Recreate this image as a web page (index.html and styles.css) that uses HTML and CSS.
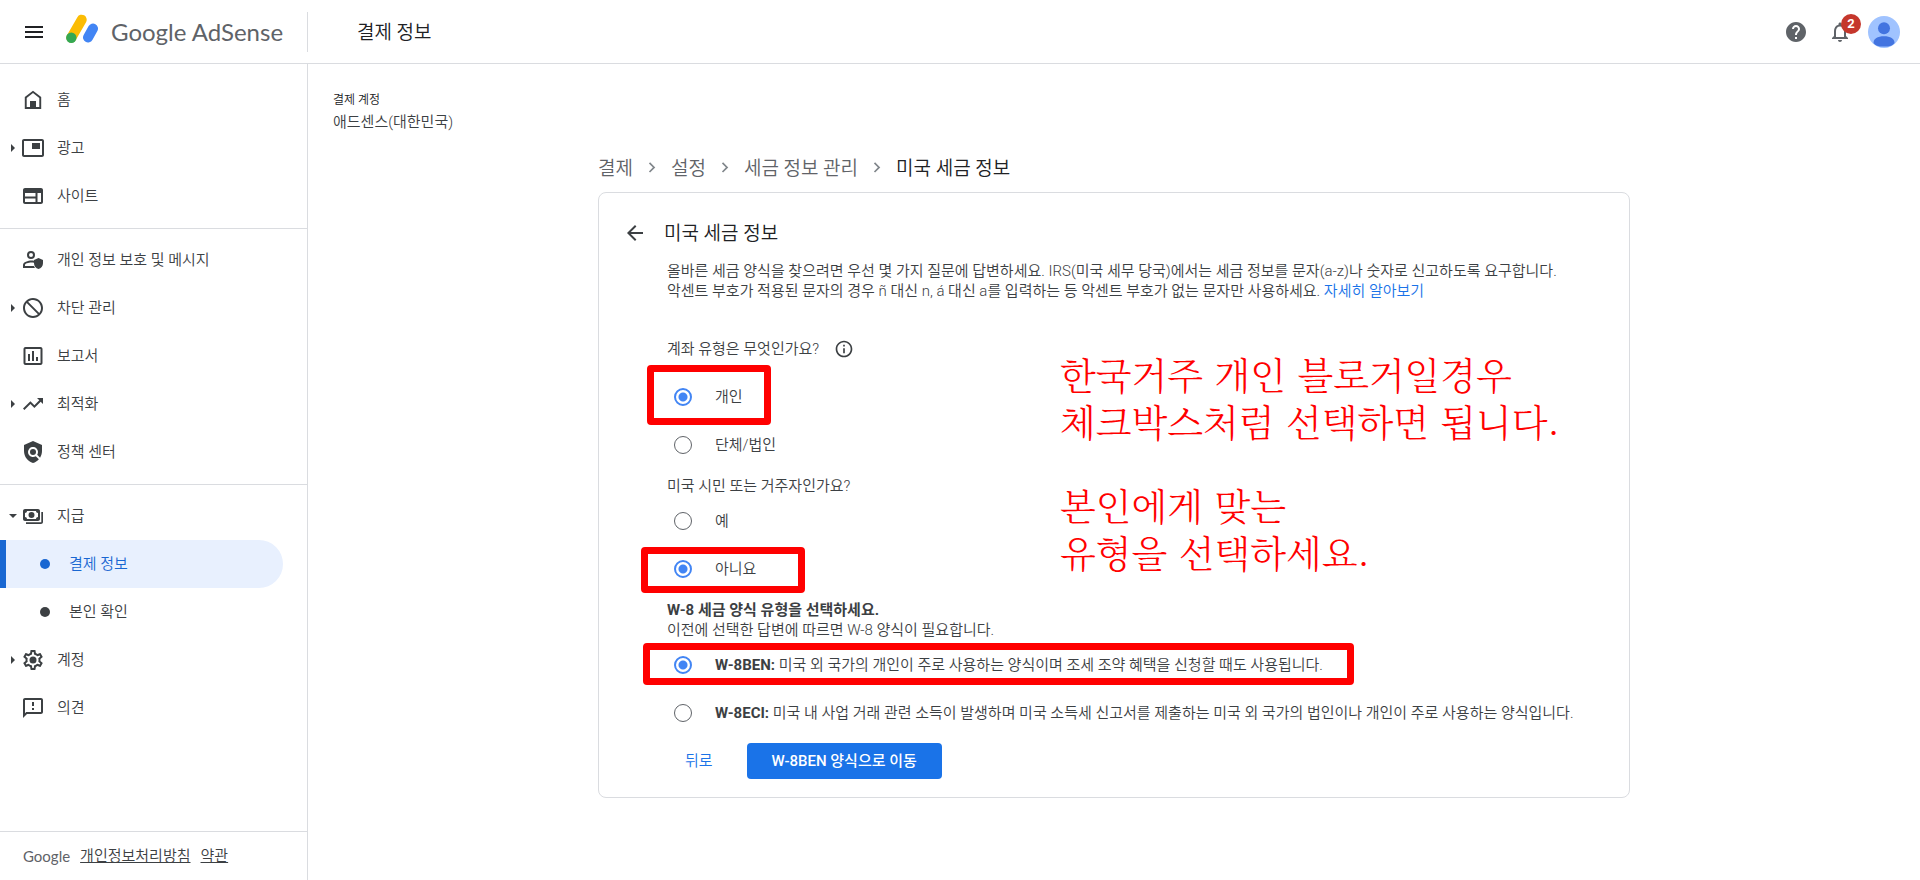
FILE: index.html
```html
<!DOCTYPE html>
<html lang="ko">
<head>
<meta charset="utf-8">
<title>Google AdSense - 결제 정보</title>
<link rel="stylesheet" href="styles.css">
</head>
<body>
<header class="topbar">
  <div class="brand">
    <button class="icon-btn" type="button" aria-label="메뉴"><svg class="icon" viewBox="0 0 24 24"><path d="M3 18h18v-2H3v2zm0-5h18v-2H3v2zm0-7v2h18V6H3z"/></svg></button>
    <a class="logo" href="#">
      <svg class="logo-mark" viewBox="0 0 32 30"><g fill="none" stroke-linecap="round" stroke-width="10"><path stroke="#fbbc04" d="M5.300 23.700 15.700 5.700"/><path stroke="#4285f4" d="M22 23.500 27 14.500"/></g><circle cx="5.300" cy="23.700" r="5.200" fill="#34a853"/></svg>
      <span class="logo-text">Google AdSense</span>
    </a>
  </div>
  <h1 class="page-title">결제 정보</h1>
  <div class="actions">
    <button class="icon-btn" type="button" aria-label="도움말"><svg class="icon" viewBox="0 0 24 24"><path d="M12 2C6.480 2 2 6.480 2 12s4.480 10 10 10 10-4.480 10-10S17.520 2 12 2zm1 17h-2v-2h2v2zm2.070-7.750-.9.920C13.450 12.900 13 13.500 13 15h-2v-.5c0-1.100.45-2.100 1.170-2.830l1.240-1.260c.37-.36.59-.86.59-1.410 0-1.100-.9-2-2-2s-2 .9-2 2H8c0-2.210 1.790-4 4-4s4 1.790 4 4c0 .88-.36 1.680-.93 2.250z"/></svg></button>
    <button class="icon-btn bell" type="button" aria-label="알림 2개"><svg class="icon" viewBox="0 0 24 24"><path d="M12 22c1.100 0 2-.9 2-2h-4c0 1.100.9 2 2 2zm6-6v-5c0-3.070-1.630-5.640-4.500-6.320V4c0-.83-.67-1.500-1.500-1.500s-1.500.67-1.500 1.500v.68C7.640 5.360 6 7.920 6 11v5l-2 2v1h16v-1l-2-2zm-2 1H8v-6c0-2.480 1.510-4.500 4-4.500s4 2.020 4 4.500v6z"/></svg><span class="badge">2</span></button>
    <button class="icon-btn" type="button" aria-label="계정"><svg class="avatar" viewBox="0 0 32 32"><clipPath id="face"><circle cx="16" cy="16" r="16"/></clipPath><g clip-path="url(#face)"><path fill="#a0c3ff" d="M0 0h32v32H0z"/><circle cx="16" cy="12.300" r="6" fill="#4374e0"/><path fill="#4374e0" d="M5.500 27c0-4.500 4-6.800 10.500-6.800S26.500 22.500 26.500 27c-1.500 2.500-4 3.600-10.500 3.600S7 29.500 5.500 27z"/></g></svg></button>
  </div>
</header>

<div class="shell">
  <aside class="sidebar">
    <nav class="nav">
      <ul class="group">
        <li><a class="item" href="#"><span class="caret"></span><svg class="icon" viewBox="0 0 24 24"><path d="M12 2.700 3.800 9v12h16.400V9L12 2.700zM5.700 19.100v-9.200L12 5.100l6.300 4.800v9.200H15v-6H9v6H5.700z"/><path d="M9 13h6v7H9z"/></svg>홈</a></li>
        <li><a class="item" href="#"><span class="caret closed"></span><svg class="icon" viewBox="0 0 24 24"><path d="M19 7h-8v6h8V7zm2-4H3c-1.100 0-2 .9-2 2v14c0 1.100.9 1.980 2 1.980h18c1.100 0 2-.88 2-1.980V5c0-1.100-.9-2-2-2zm0 16H3V5h18v14z"/></svg>광고</a></li>
        <li><a class="item" href="#"><span class="caret"></span><svg class="icon" viewBox="0 0 24 24"><path d="M20 4H4c-1.100 0-1.990.9-1.990 2L2 18c0 1.100.9 2 2 2h16c1.100 0 2-.9 2-2V6c0-1.100-.9-2-2-2zM4 9h10.500v3.500H4V9zm0 5.500h10.500V18H4v-3.500zM20 18h-3.500V9H20v9z"/></svg>사이트</a></li>
      </ul>
      <ul class="group">
        <li><a class="item" href="#"><span class="caret"></span><svg class="icon" viewBox="0 0 24 24"><path fill-rule="evenodd" d="M10 3a4 4 0 1 1 0 8 4 4 0 0 1 0-8zm0 2a2 2 0 1 0 0 4 2 2 0 0 0 0-4zM2 20v-2.800C2 14 7.300 12.500 11 12.600c.7 0 1.300 0 2 .2v2c-4-.7-9 .5-9 2.400v.8h9c.2.800.6 1.400 1 2H2zM17.500 10l4.500 2v3.200c0 2.800-1.900 5-4.500 5.800-2.600-.8-4.500-3-4.500-5.800V12l4.500-2z"/></svg>개인 정보 보호 및 메시지</a></li>
        <li><a class="item" href="#"><span class="caret closed"></span><svg class="icon" viewBox="0 0 24 24"><path d="M12 2C6.480 2 2 6.480 2 12s4.480 10 10 10 10-4.480 10-10S17.520 2 12 2zM4 12c0-4.420 3.580-8 8-8 1.850 0 3.550.63 4.900 1.690L5.690 16.900C4.630 15.550 4 13.850 4 12zm8 8c-1.850 0-3.550-.63-4.900-1.690L18.310 7.100C19.370 8.450 20 10.150 20 12c0 4.420-3.580 8-8 8z" transform="matrix(-1 0 0 1 24 0)"/></svg>차단 관리</a></li>
        <li><a class="item" href="#"><span class="caret"></span><svg class="icon" viewBox="0 0 24 24"><path d="M9 17H7v-7h2v7zm4 0h-2V7h2v10zm4 0h-2v-4h2v4zm2.500 2.100h-15V5h15v14.100zm0-16.100h-15c-1.100 0-2 .9-2 2v14c0 1.100.9 2 2 2h15c1.100 0 2-.9 2-2V5c0-1.100-.9-2-2-2z"/></svg>보고서</a></li>
        <li><a class="item" href="#"><span class="caret closed"></span><svg class="icon" viewBox="0 0 24 24"><path d="m16 6 2.290 2.290-4.880 4.880-4-4L2 16.590 3.410 18l6-6 4 4 6.300-6.290L22 12V6z"/></svg>최적화</a></li>
        <li><a class="item" href="#"><span class="caret"></span><svg class="icon" viewBox="0 0 24 24"><path d="M21 5l-9-4-9 4v6c0 5.550 3.840 10.740 9 12 2.300-.56 4.330-1.900 5.880-3.710l-3.120-3.120c-1.940 1.290-4.580 1.070-6.290-.64-1.950-1.950-1.950-5.120 0-7.070 1.950-1.950 5.120-1.950 7.070 0 1.710 1.710 1.920 4.350.64 6.290l2.900 2.900C20.290 15.690 21 13.380 21 11V5z"/><circle cx="12" cy="12" r="3"/></svg>정책 센터</a></li>
      </ul>
      <ul class="group">
        <li><a class="item" href="#"><span class="caret open"></span><svg class="icon" viewBox="0 0 24 24"><path fill-rule="evenodd" d="M4 5h13c1.100 0 2 .9 2 2v8c0 1.100-.9 2-2 2H4c-1.100 0-2-.9-2-2V7c0-1.100.9-2 2-2zm2 2c0 1.100-.9 2-2 2v4c1.100 0 2 .9 2 2h9c0-1.100.9-2 2-2V9c-1.100 0-2-.9-2-2H6zm4.500 1a3 3 0 1 1 0 6 3 3 0 0 1 0-6zM20.300 8H22v10c0 1.100-.9 2-2 2H5v-1.800h15.300V8z"/></svg>지급</a>
          <ul class="sub">
            <li><a class="sub-item active" href="#" aria-current="page"><span class="dot"></span>결제 정보</a></li>
            <li><a class="sub-item" href="#"><span class="dot"></span>본인 확인</a></li>
          </ul>
        </li>
        <li><a class="item" href="#"><span class="caret closed"></span><svg class="icon" viewBox="0 0 24 24"><path d="M19.430 12.980c.04-.32.07-.64.07-.98 0-.34-.03-.66-.07-.98l2.110-1.650c.19-.15.24-.42.12-.64l-2-3.460c-.09-.16-.26-.25-.44-.25-.06 0-.12.010-.17.030l-2.490 1c-.52-.4-1.080-.73-1.690-.98l-.38-2.650C14.460 2.180 14.250 2 14 2h-4c-.25 0-.46.18-.49.42l-.38 2.650c-.61.25-1.170.59-1.690.98l-2.490-1c-.06-.02-.12-.03-.18-.03-.17 0-.34.09-.43.25l-2 3.460c-.13.22-.07.49.12.64l2.110 1.650c-.04.32-.07.65-.07.98 0 .33.03.66.07.98l-2.110 1.650c-.19.15-.24.42-.12.64l2 3.460c.09.16.26.25.44.25.06 0 .12-.01.17-.03l2.490-1c.52.4 1.080.73 1.690.98l.38 2.650c.03.24.24.42.49.42h4c.25 0 .46-.18.49-.42l.38-2.650c.61-.25 1.170-.59 1.690-.98l2.490 1c.06.020.12.030.18.030.17 0 .34-.09.43-.25l2-3.460c.12-.22.07-.49-.12-.64l-2.110-1.650zm-1.980-1.710c.04.31.05.52.05.73 0 .21-.02.43-.05.73l-.14 1.130.89.7 1.080.84-.7 1.210-1.270-.51-1.040-.42-.9.680c-.43.32-.84.56-1.250.73l-1.060.43-.16 1.130-.2 1.350h-1.400l-.19-1.350-.16-1.130-1.060-.43c-.43-.18-.83-.41-1.230-.71l-.91-.7-1.060.43-1.270.51-.7-1.210 1.080-.84.89-.7-.14-1.130c-.03-.31-.05-.54-.05-.74s.02-.43.05-.73l.14-1.130-.89-.7-1.080-.84.7-1.210 1.270.51 1.040.42.9-.68c.43-.32.84-.56 1.250-.73l1.060-.43.16-1.130.2-1.350h1.390l.19 1.350.16 1.130 1.060.43c.43.18.83.41 1.230.71l.91.7 1.060-.43 1.270-.51.7 1.210-1.070.85-.89.7.14 1.130z"/><circle cx="12" cy="12" r="3.500"/></svg>계정</a></li>
        <li><a class="item" href="#"><span class="caret"></span><svg class="icon" viewBox="0 0 24 24"><path d="M20 2H4c-1.100 0-1.990.9-1.990 2L2 22l4-4h14c1.100 0 2-.9 2-2V4c0-1.100-.9-2-2-2zm0 14H5.170L4 17.170V4h16v12zM11 12h2v2h-2zm0-6h2v4h-2z"/></svg>의견</a></li>
      </ul>
    </nav>
    <footer class="legal"><span class="google">Google</span><a href="#">개인정보처리방침</a><a href="#">약관</a></footer>
  </aside>

  <main class="main">
    <div class="account">
      <div class="account-label">결제 계정</div>
      <div class="account-name">애드센스(대한민국)</div>
    </div>
    <div class="content">
      <nav class="crumbs">
        <a href="#">결제</a>
        <svg class="chevron" viewBox="0 0 24 24"><path d="m9 7 5.500 5.500L9 18"/></svg>
        <a href="#">설정</a>
        <svg class="chevron" viewBox="0 0 24 24"><path d="m9 7 5.500 5.500L9 18"/></svg>
        <a href="#">세금 정보 관리</a>
        <svg class="chevron" viewBox="0 0 24 24"><path d="m9 7 5.500 5.500L9 18"/></svg>
        <span class="current">미국 세금 정보</span>
      </nav>
      <section class="card">
        <div class="card-head">
          <button class="icon-btn" type="button" aria-label="뒤로"><svg class="icon" viewBox="0 0 24 24"><path d="M20 11H7.830l5.590-5.590L12 4l-8 8 8 8 1.410-1.410L7.830 13H20v-2z"/></svg></button>
          <h2 class="card-title">미국 세금 정보</h2>
        </div>
        <form class="form">
          <p class="intro">올바른 세금 양식을 찾으려면 우선 몇 가지 질문에 답변하세요. IRS(미국 세무 당국)에서는 세금 정보를 문자(a-z)나 숫자로 신고하도록 요구합니다.<br>악센트 부호가 적용된 문자의 경우 ñ 대신 n, á 대신 a를 입력하는 등 악센트 부호가 없는 문자만 사용하세요. <a href="#">자세히 알아보기</a></p>
          <fieldset class="question">
            <legend class="ask">계좌 유형은 무엇인가요?<svg class="info" viewBox="0 0 24 24"><path d="M11 7h2v2h-2zm0 4h2v6h-2zm1-9C6.480 2 2 6.480 2 12s4.480 10 10 10 10-4.480 10-10S17.520 2 12 2zm0 18c-4.410 0-8-3.590-8-8s3.590-8 8-8 8 3.590 8 8-3.590 8-8 8z"/></svg></legend>
            <div class="options">
              <label class="option"><input type="radio" name="account" checked><span>개인</span></label>
              <label class="option"><input type="radio" name="account"><span>단체/법인</span></label>
            </div>
          </fieldset>
          <fieldset class="question">
            <legend class="ask">미국 시민 또는 거주자인가요?</legend>
            <label class="option"><input type="radio" name="citizen"><span>예</span></label>
            <label class="option"><input type="radio" name="citizen" checked><span>아니요</span></label>
          </fieldset>
          <fieldset class="question">
            <legend class="ask-block"><b>W-8 세금 양식 유형을 선택하세요.</b><br>이전에 선택한 답변에 따르면 W-8 양식이 필요합니다.</legend>
            <label class="option"><input type="radio" name="form" checked><span><b>W-8BEN:</b> 미국 외 국가의 개인이 주로 사용하는 양식이며 조세 조약 혜택을 신청할 때도 사용됩니다.</span></label>
            <label class="option"><input type="radio" name="form"><span><b>W-8ECI:</b> 미국 내 사업 거래 관련 소득이 발생하며 미국 소득세 신고서를 제출하는 미국 외 국가의 법인이나 개인이 주로 사용하는 양식입니다.</span></label>
          </fieldset>
          <div class="buttons">
            <button class="btn text" type="button">뒤로</button>
            <button class="btn primary" type="submit">W-8BEN 양식으로 이동</button>
          </div>
        </form>
        <div class="mark mark-person"></div>
        <div class="mark mark-no"></div>
        <div class="mark mark-w8ben"></div>
        <div class="note">
          <p>한국거주 개인 블로거일경우<br>체크박스처럼 선택하면 됩니다.</p>
          <p>본인에게 맞는<br>유형을 선택하세요.</p>
        </div>
      </section>
    </div>
  </main>
</div>
</body>
</html>
```

FILE: styles.css
```css
* { box-sizing: border-box; }
body {
  margin: 0;
  min-height: 100vh;
  display: flex;
  flex-direction: column;
  font: 350 15px/20px Roboto, "Noto Sans CJK KR", sans-serif;
  color: #3c4043;
  background: #fff;
}
h1, h2, p, ul, fieldset, legend { margin: 0; padding: 0; border: 0; }
ul { list-style: none; }
a { color: inherit; text-decoration: none; }
b { font-weight: 700; }
button { font: inherit; color: inherit; cursor: pointer; }
.icon { width: 24px; height: 24px; fill: currentColor; flex: none; display: block; }
.icon-btn { border: 0; padding: 0; background: none; display: block; }

.topbar {
  display: flex;
  align-items: center;
  height: 64px;
  padding-right: 20px;
  border-bottom: 1px solid #dadce0;
}
.brand {
  display: flex;
  align-items: center;
  width: 308px;
  height: 40px;
  padding-left: 22px;
  border-right: 1px solid #dadce0;
  color: #202124;
}
.logo { display: flex; align-items: center; gap: 13px; margin-left: 20px; }
.logo-mark { width: 32px; height: 30px; margin-bottom: 5px; }
.logo-text { font: 400 24px/32px Lato, sans-serif; color: #5f6368; white-space: nowrap; }
.page-title { margin-left: 49px; padding-top: 2px; font-size: 19px; font-weight: inherit; line-height: 28px; color: #202124; }
.actions { display: flex; align-items: center; gap: 20px; margin-left: auto; color: #5f6368; }
.bell { position: relative; }
.badge {
  position: absolute;
  top: -6px;
  left: 13px;
  width: 20px;
  border-radius: 10px;
  background: #c5372c;
  color: #fff;
  font: 700 13px/20px Roboto, sans-serif;
  text-align: center;
}
.avatar { width: 32px; height: 32px; display: block; }
.bell + .icon-btn { margin-left: -4px; }

.shell { flex: 1; display: flex; }
.sidebar {
  width: 308px;
  flex: none;
  display: flex;
  flex-direction: column;
  border-right: 1px solid #dadce0;
}
.nav { flex: 1; padding-top: 5px; }
.group { padding: 7px 0 8px; }
.group + .group { border-top: 1px solid #dadce0; }
.item { display: flex; align-items: center; height: 48px; padding-left: 5px; }
.item .icon { margin-right: 12px; }
.caret { width: 16px; display: flex; justify-content: center; }
.caret.closed::before { content: ""; border: solid transparent; border-width: 4px 0 4px 4px; border-left-color: currentColor; }
.caret.open::before { content: ""; border: solid transparent; border-width: 4px 4px 0; border-top-color: currentColor; }
.sub-item { display: flex; align-items: center; gap: 19px; height: 48px; margin-right: 24px; padding-left: 40px; }
.sub-item.active {
  padding-left: 34px;
  border-left: 6px solid #1967d2;
  border-radius: 0 24px 24px 0;
  background: #e8f0fe;
  color: #1967d2;
}
.dot { width: 10px; height: 10px; border-radius: 50%; background: currentColor; }
.legal { display: flex; align-items: center; gap: 10px; height: 49px; padding-left: 23px; border-top: 1px solid #dadce0; }
.legal a { text-decoration: underline; }
.google { font: 400 15px/20px Lato, sans-serif; color: #5f6368; }

.main { flex: 1; min-width: 0; }
.account { padding: 26px 25px 0; }
.account-label { font-size: 12px; color: #202124; }
.account-name { margin-top: 2px; }
.content { max-width: 1032px; margin: 20px auto 0; }
.crumbs { display: flex; align-items: center; gap: 7px; height: 32px; padding-top: 2px; font-size: 19px; color: #5f6368; white-space: nowrap; }
.chevron { width: 24px; height: 24px; padding-bottom: 4px; fill: none; stroke: #80868b; stroke-width: 2; }
.current { color: #202124; }

.card { position: relative; margin-top: 8px; padding: 20px 28px 18px 24px; border: 1px solid #dadce0; border-radius: 8px; }
.card-head { display: flex; align-items: center; gap: 17px; height: 40px; }
.card-title { padding-top: 2px; font-size: 19px; font-weight: inherit; line-height: 28px; color: #202124; }
.form { padding-left: 44px; }
.intro { margin-top: 8px; white-space: nowrap; }
.intro a { color: #1a73e8; }
.question { min-width: 0; }
.ask { display: flex; align-items: center; gap: 15px; height: 22px; white-space: nowrap; }
.intro + .question { margin-top: 37px; }
.info { width: 20px; height: 20px; fill: currentColor; }
.options { padding-top: 13px; }
.question + .question { margin-top: 6px; }
.ask-block { padding: 1px 0; }
.option { display: flex; align-items: center; gap: 23px; height: 48px; padding-left: 7px; white-space: nowrap; }
.option input {
  appearance: none;
  width: 18px;
  height: 18px;
  margin: 0;
  flex: none;
  border: 1px solid #5f6368;
  border-radius: 50%;
}
.option input:checked { border: 2px solid #4285f4; background: radial-gradient(circle, #4285f4 4px, transparent 5px); }
.buttons { display: flex; gap: 16px; margin-top: 6px; }
.btn { height: 36px; padding: 0 18px; border: 0; border-radius: 4px; background: none; color: #1a73e8; }
.btn.primary { padding: 0 25px; background: #1a73e8; color: #fff; font-weight: 500; }

.mark { position: absolute; border: 7px solid #f00; border-radius: 4px; pointer-events: none; }
.mark-person { left: 48px; top: 172px; width: 124px; height: 60px; }
.mark-no { left: 42px; top: 354px; width: 164px; height: 46px; }
.mark-w8ben { left: 44px; top: 450px; width: 711px; height: 42px; }
.note {
  position: absolute;
  left: 461px;
  top: 158px;
  display: grid;
  gap: 37px;
  font: 300 37px/47px "Noto Serif CJK KR", "Noto Sans CJK KR", serif;
  color: #f00;
  white-space: nowrap;
}
```
